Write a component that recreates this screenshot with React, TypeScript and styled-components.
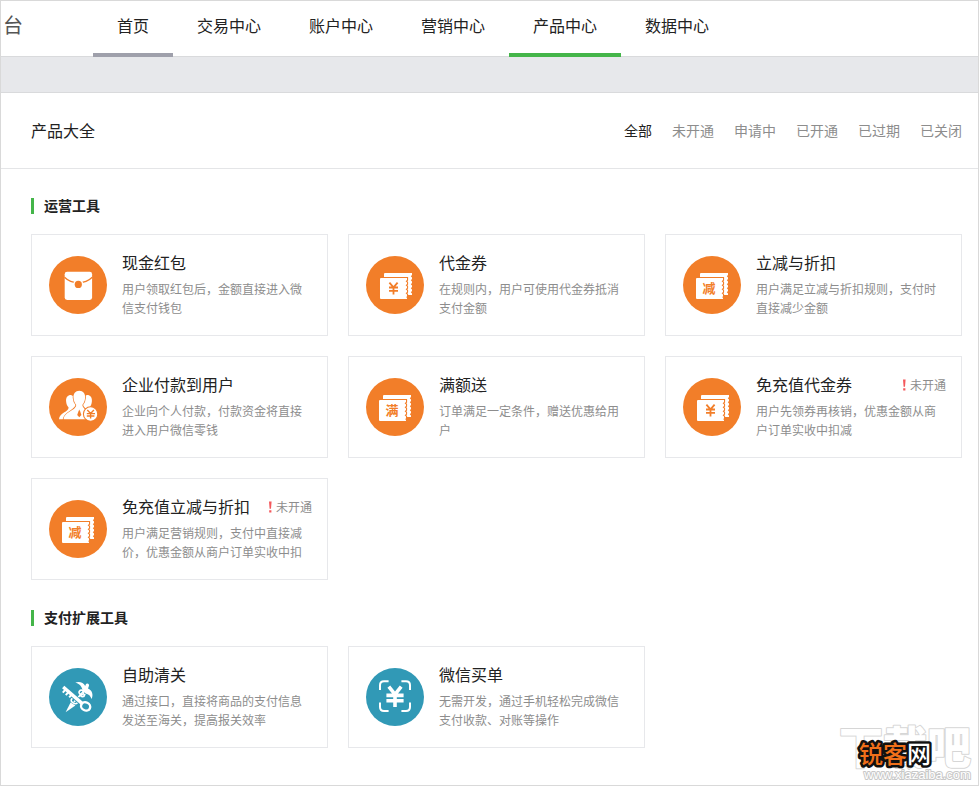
import React, { useState } from "react";
import styled, { createGlobalStyle } from "styled-components";

const ORANGE = "#f27e29";
const TEAL = "#3199b6";
const CJK = '"Noto Sans CJK SC", sans-serif';

const GlobalStyle = createGlobalStyle`
  *, *::before, *::after { box-sizing: border-box; }
  body {
    margin: 0;
    background: #fff;
    color: #222;
    font-family: "Noto Sans CJK SC", sans-serif;
    font-size: 14px;
  }
`;

const Page = styled.div`
  position: relative;
  min-height: 100vh;
  border: 1px solid #d9d9d9;
`;

const Header = styled.header`
  display: flex;
  height: 56px;
  border-bottom: 1px solid #d9dadc;
`;

const Brand = styled.div`
  width: 92px;
  padding-left: 2px;
  font-size: 20px;
  line-height: 48px;
  color: #555;
`;

const Nav = styled.nav`
  display: flex;
`;

const NavLink = styled.a<{ $line?: string }>`
  height: 56px;
  padding: 0 24px;
  border-bottom: 4px solid ${(p) => p.$line ?? "transparent"};
  font-size: 16px;
  line-height: 48px;
  color: #222;
  text-decoration: none;
  white-space: nowrap;
`;

const Band = styled.div`
  height: 36px;
  background: #e7e8eb;
  border-bottom: 1px solid #d9dadc;
`;

const TitleBar = styled.div`
  display: flex;
  align-items: center;
  justify-content: space-between;
  height: 76px;
  padding: 0 16px 2px 30px;
  border-bottom: 1px solid #e4e5e7;
`;

const PageTitle = styled.h1`
  margin: 0;
  font-size: 16px;
  font-weight: 400;
  line-height: 24px;
`;

const Filters = styled.div`
  display: flex;
  gap: 20px;
`;

const FilterButton = styled.button<{ $active: boolean }>`
  padding: 0;
  border: 0;
  background: none;
  font-family: inherit;
  font-size: 14px;
  line-height: 20px;
  color: ${(p) => (p.$active ? "#222" : "#8d8d8d")};
  cursor: pointer;
`;

const Content = styled.main`
  display: flex;
  flex-direction: column;
  gap: 30px;
  padding: 29px 16px 36px 30px;
`;

const SectionTitle = styled.h2`
  margin: 0 0 20px;
  padding: 0 0 2px 10px;
  border-left: 3px solid #44b549;
  font-size: 14px;
  font-weight: 700;
  line-height: 14px;
`;

const CardGrid = styled.div`
  display: grid;
  grid-template-columns: repeat(3, minmax(0, 1fr));
  gap: 20px;
`;

const Card = styled.a`
  display: flex;
  gap: 15px;
  min-height: 102px;
  padding: 15px 15px 15px 17px;
  border: 1px solid #e7e8eb;
  color: inherit;
  text-decoration: none;
`;

const Icon = styled.svg`
  flex: none;
  width: 58px;
  height: 58px;
  margin-top: 6px;
`;

const CardBody = styled.div`
  flex: 1;
  min-width: 0;
`;

const CardHead = styled.div`
  display: flex;
  align-items: flex-end;
  justify-content: space-between;
  margin-bottom: 5px;
`;

const CardTitle = styled.h3`
  margin: 0;
  font-size: 16px;
  font-weight: 400;
  line-height: 24px;
  white-space: nowrap;
`;

const Status = styled.span`
  display: flex;
  align-items: center;
  font-size: 12px;
  line-height: 22px;
  color: #8d8d8d;
  white-space: nowrap;
`;

const Description = styled.p`
  margin: 0;
  padding-right: 10px;
  font-size: 12px;
  line-height: 19px;
  color: #8d8d8d;
`;

const Watermark = styled.svg`
  position: absolute;
  right: 4px;
  bottom: 0;
  width: 138px;
  height: 66px;
  pointer-events: none;
`;

function PacketIcon() {
  return (
    <Icon viewBox="0 0 58 58" aria-hidden="true">
      <circle cx="29" cy="29" r="29" fill={ORANGE} />
      <rect x="15.7" y="15.8" width="27.4" height="28.2" rx="2.4" fill="#fff" />
      <path d="M15.5 21.2Q21 26.6 29.3 26.8Q37.7 26.6 43.3 21.2" fill="none" stroke={ORANGE} strokeWidth="1.3" />
      <circle cx="29.3" cy="28.4" r="5" fill="#fff" />
      <circle cx="29.3" cy="28.4" r="3.6" fill={ORANGE} />
    </Icon>
  );
}

function TicketIcon({ mark }: { mark?: string }) {
  return (
    <Icon viewBox="0 0 58 58" aria-hidden="true">
      <circle cx="29" cy="29" r="29" fill={ORANGE} />
      <g transform={mark ? "translate(13 17)" : "translate(14 17)"}>
        <path
          d="M5 0H32V2L30.8 3.2L32 4.4V6L30.8 7.2L32 8.4V10L30.8 11.2L32 12.4V14L30.8 15.2L32 16.4V18L30.8 19.2L32 20.4V22H4V1Q4 0 5 0Z"
          fill="#fff"
        />
        <path
          d="M1 5H27V7L25.6 8.2L27 9.4V11L25.6 12.2L27 13.4V15L25.6 16.2L27 17.4V19L25.6 20.2L27 21.4V23L26.4 24.2L27 25.2V26H1Q0 26 0 25V6Q0 5 1 5Z"
          fill="#fff"
          stroke={ORANGE}
          strokeWidth="2.2"
          paintOrder="stroke"
        />
        {mark ? (
          <text x="13" y="20.2" textAnchor="middle" fontFamily={CJK} fontSize="13" fontWeight="700" fill={ORANGE}>
            {mark}
          </text>
        ) : (
          <path d="M9.4 9.6L13.5 14.4L17.6 9.6M13.5 14.2V21.5M9 14.5H18M9 17.9H18" fill="none" stroke={ORANGE} strokeWidth="1.8" />
        )}
      </g>
    </Icon>
  );
}

function PeopleIcon() {
  return (
    <Icon viewBox="0 0 58 58" aria-hidden="true">
      <circle cx="29" cy="29" r="29" fill={ORANGE} />
      <path
        d="M22 17C18.6 17 16.8 19.4 17.1 23.2C17.3 26 18.3 28 19.6 29.4C19.8 33.8 10.4 34.6 10 41.2H28V20Z"
        fill="#fff"
      />
      <path
        d="M38 17C41.4 17 43.2 19.4 42.9 23.2C42.7 26 41.7 28 40.4 29.4C40.3 31.6 42 33 44 34.4V41.2H30V20Z"
        fill="#fff"
      />
      <path
        d="M30.3 12.7C26.4 12.7 24.2 15.6 24.5 19.8C24.7 22.9 25.8 25.3 27.2 26.8C27.4 32.6 15.4 33.6 14.6 41.2H46C45.4 33.6 33.2 32.6 33.4 26.8C34.8 25.3 35.9 22.9 36.1 19.8C36.4 15.6 34.2 12.7 30.3 12.7Z"
        fill="#fff"
        stroke={ORANGE}
        strokeWidth="1.6"
        paintOrder="stroke"
      />
      <path d="M30.3 31.6L31.2 33.4L32.4 37L30.3 39.2L28.2 37L29.4 33.4Z" fill={ORANGE} />
      <circle cx="41.6" cy="36" r="7.2" fill="#fff" stroke={ORANGE} strokeWidth="1.1" />
      <path d="M38.3 32L41.6 35.5L44.9 32M41.6 35V40.6M37.8 35.6H46M37.8 38H45.4" fill="none" stroke={ORANGE} strokeWidth="1.4" />
    </Icon>
  );
}

function CustomsIcon() {
  return (
    <Icon viewBox="0 0 58 58" aria-hidden="true">
      <circle cx="29" cy="29" r="29" fill={TEAL} />
      <path
        d="M26.2 14.6C30.5 13.2 34.6 14.6 36.2 18.1L37 16A1.8 1.8 0 0 1 40 17.8L39 20.4C42.9 22 44.8 26.4 42.5 31C41.6 27.6 39.7 26 36.6 25.4L33.6 23C33.3 18.6 30.4 16 26.2 14.6Z"
        fill="#fff"
      />
      <path d="M37.5 20L25 34" fill="none" stroke="#fff" strokeWidth="1.8" />
      <path d="M21.6 34.6L26.4 37.6L16.6 44.2Z" fill="#fff" />
      <path
        d="M34.6 22.6C30.6 21 28.4 24.6 31.4 26.2C34.4 27.8 35.6 24.6 33.2 24M31.2 26.4C32 30 35.4 29 36 26M28.2 31.4C23.4 27.8 20 32.6 23.8 34.6C27.8 37.4 30.4 33.6 27.2 31.8"
        fill="none"
        stroke="#fff"
        strokeWidth="1.6"
      />
      <path d="M15.6 20.4L32.6 35.2" stroke={TEAL} strokeWidth="5" />
      <path d="M14.2 19L33 35.4" stroke="#fff" strokeWidth="3.4" />
      <path d="M16.4 21.6L13.8 24.6M19.4 24.2L16.8 27.2M22.4 26.8L20.2 29.4" stroke="#fff" strokeWidth="2" />
      <ellipse cx="36.6" cy="38.4" rx="4.7" ry="4" fill={TEAL} stroke="#fff" strokeWidth="2.4" transform="rotate(25 36.6 38.4)" />
    </Icon>
  );
}

function ScanIcon() {
  return (
    <Icon viewBox="0 0 58 58" aria-hidden="true">
      <circle cx="29" cy="29" r="29" fill={TEAL} />
      <path
        d="M14 22V17.3Q14 13.3 18 13.3H22.6M35.4 13.3H40Q44 13.3 44 17.3V22M44 34.4V39Q44 43 40 43H35.4M22.6 43H18Q14 43 14 39V34.4"
        fill="none"
        stroke="#fff"
        strokeWidth="2"
      />
      <path d="M22.8 18.6L29 26.4L35.2 18.6M29 26V39M20.4 27.4H37.6M20.4 32.8H37.6" fill="none" stroke="#fff" strokeWidth="3.6" />
    </Icon>
  );
}

interface Product {
  title: string;
  text: string;
  icon: React.ReactNode;
  status?: string;
}

const sections: { title: string; items: Product[] }[] = [
  {
    title: "运营工具",
    items: [
      { title: "现金红包", text: "用户领取红包后，金额直接进入微信支付钱包", icon: <PacketIcon /> },
      { title: "代金券", text: "在规则内，用户可使用代金券抵消支付金额", icon: <TicketIcon /> },
      { title: "立减与折扣", text: "用户满足立减与折扣规则，支付时直接减少金额", icon: <TicketIcon mark="减" /> },
      { title: "企业付款到用户", text: "企业向个人付款，付款资金将直接进入用户微信零钱", icon: <PeopleIcon /> },
      { title: "满额送", text: "订单满足一定条件，赠送优惠给用户", icon: <TicketIcon mark="满" /> },
      { title: "免充值代金券", text: "用户先领券再核销，优惠金额从商户订单实收中扣减", icon: <TicketIcon />, status: "未开通" },
      { title: "免充值立减与折扣", text: "用户满足营销规则，支付中直接减价，优惠金额从商户订单实收中扣", icon: <TicketIcon mark="减" />, status: "未开通" },
    ],
  },
  {
    title: "支付扩展工具",
    items: [
      { title: "自助清关", text: "通过接口，直接将商品的支付信息发送至海关，提高报关效率", icon: <CustomsIcon /> },
      { title: "微信买单", text: "无需开发，通过手机轻松完成微信支付收款、对账等操作", icon: <ScanIcon /> },
    ],
  },
];

const navItems: { label: string; line?: string }[] = [
  { label: "首页", line: "#9fa0ab" },
  { label: "交易中心" },
  { label: "账户中心" },
  { label: "营销中心" },
  { label: "产品中心", line: "#44b549" },
  { label: "数据中心" },
];

const filterLabels = ["全部", "未开通", "申请中", "已开通", "已过期", "已关闭"];

export default function App() {
  const [filter, setFilter] = useState("全部");

  return (
    <Page>
      <GlobalStyle />
      <Header>
        <Brand>台</Brand>
        <Nav>
          {navItems.map((item) => (
            <NavLink key={item.label} href="#" $line={item.line}>
              {item.label}
            </NavLink>
          ))}
        </Nav>
      </Header>
      <Band />
      <TitleBar>
        <PageTitle>产品大全</PageTitle>
        <Filters>
          {filterLabels.map((label) => (
            <FilterButton
              key={label}
              type="button"
              $active={filter === label}
              aria-pressed={filter === label}
              onClick={() => setFilter(label)}
            >
              {label}
            </FilterButton>
          ))}
        </Filters>
      </TitleBar>
      <Content>
        {sections.map((section) => (
          <section key={section.title}>
            <SectionTitle>{section.title}</SectionTitle>
            <CardGrid>
              {section.items.map((item) => (
                <Card key={item.title} href="#">
                  {item.icon}
                  <CardBody>
                    <CardHead>
                      <CardTitle>{item.title}</CardTitle>
                      {item.status && (
                        <Status>
                          <svg width="8" height="12" viewBox="0 0 8 12" aria-hidden="true">
                            <path d="M1 0.5H3.6L3 7.8H1.6ZM1.2 9.2H3.4V11.4H1.2Z" fill="#f4585c" />
                          </svg>
                          {item.status}
                        </Status>
                      )}
                    </CardHead>
                    <Description>{item.text}</Description>
                  </CardBody>
                </Card>
              ))}
            </CardGrid>
          </section>
        ))}
      </Content>
      <Watermark viewBox="0 0 138 66" role="img" aria-label="锐客网">
        <g fontFamily={CJK} strokeLinejoin="round" paintOrder="stroke">
          <text x="3" y="45" fontSize="44" fontWeight="900" fill="#fff" stroke="#d6d6d6" strokeWidth="2">
            下载吧
          </text>
          <text x="28" y="60" fontFamily='"Liberation Sans", sans-serif' fontSize="13" fill="#fff" stroke="#c8c8c8" strokeWidth="2">
            www.xiazaiba.com
          </text>
          <text x="23" y="44" fontSize="24" fontWeight="500" stroke="#111" strokeWidth="5" fill="#f0701a">
            锐客<tspan fill="#fff">网</tspan>
          </text>
        </g>
      </Watermark>
    </Page>
  );
}
